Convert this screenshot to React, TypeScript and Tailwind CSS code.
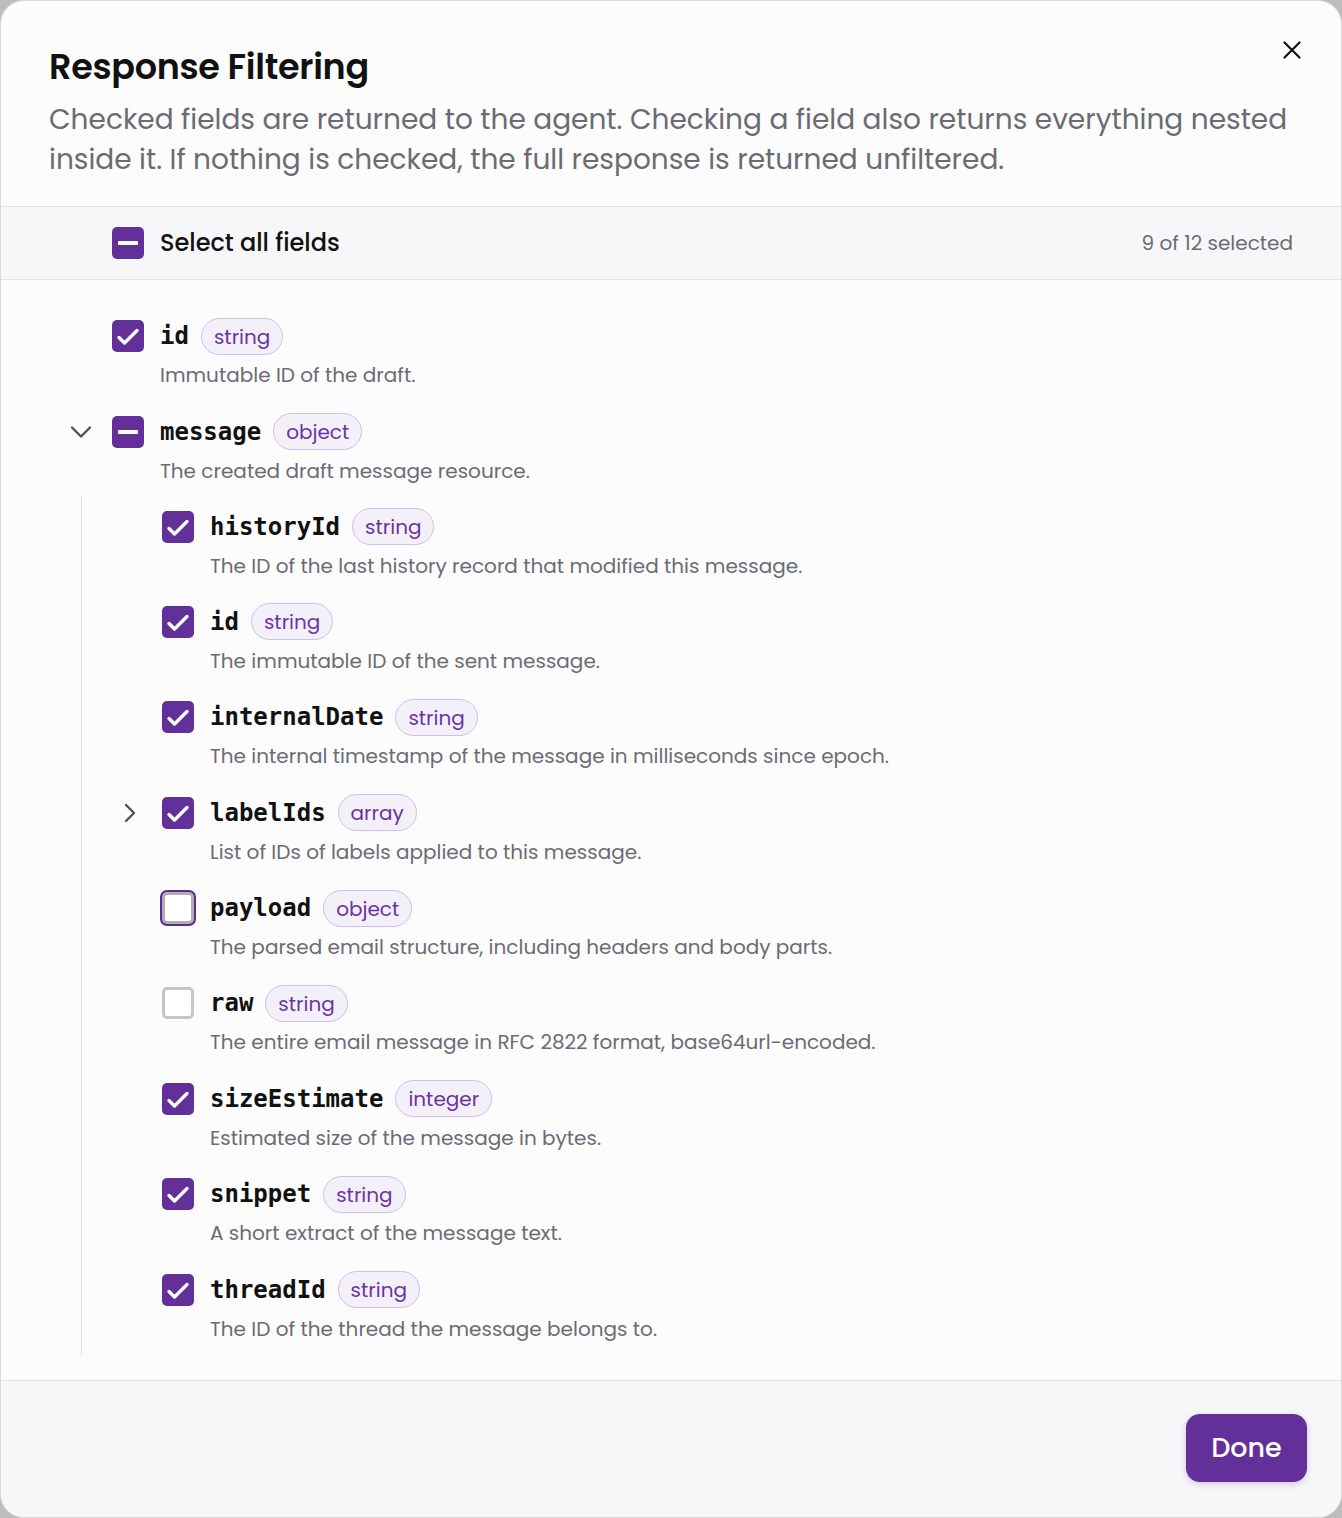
import React, { useState } from "react";

type Field = {
  name: string;
  type: string;
  description: string;
  state: "checked" | "unchecked" | "partial" | "focus";
  expandable?: "open" | "closed";
  children?: Field[];
};

const fields: Field[] = [
  { name: "id", type: "string", description: "Immutable ID of the draft.", state: "checked" },
  {
    name: "message",
    type: "object",
    description: "The created draft message resource.",
    state: "partial",
    expandable: "open",
    children: [
      { name: "historyId", type: "string", description: "The ID of the last history record that modified this message.", state: "checked" },
      { name: "id", type: "string", description: "The immutable ID of the sent message.", state: "checked" },
      { name: "internalDate", type: "string", description: "The internal timestamp of the message in milliseconds since epoch.", state: "checked" },
      { name: "labelIds", type: "array", description: "List of IDs of labels applied to this message.", state: "checked", expandable: "closed" },
      { name: "payload", type: "object", description: "The parsed email structure, including headers and body parts.", state: "focus" },
      { name: "raw", type: "string", description: "The entire email message in RFC 2822 format, base64url-encoded.", state: "unchecked" },
      { name: "sizeEstimate", type: "integer", description: "Estimated size of the message in bytes.", state: "checked" },
      { name: "snippet", type: "string", description: "A short extract of the message text.", state: "checked" },
      { name: "threadId", type: "string", description: "The ID of the thread the message belongs to.", state: "checked" },
    ],
  },
];

const sans = "font-['Poppins','Inter',sans-serif]";
const mono = "font-['DejaVu_Sans_Mono',monospace]";

const Box = ({ state }: { state: Field["state"] }) => {
  if (state === "checked") {
    return (
      <span className="flex h-8 w-8 shrink-0 rounded-[5px] bg-[#632f99]">
        <svg width="32" height="32" viewBox="0 0 32 32" fill="none" stroke="white" strokeWidth="3.4" strokeLinecap="round" strokeLinejoin="round">
          <path d="M7 17.5l5.5 5.5L25 10.5" />
        </svg>
      </span>
    );
  }
  if (state === "partial") {
    return (
      <span className="flex h-8 w-8 shrink-0 items-center justify-center rounded-[5px] bg-[#632f99]">
        <span className="h-1 w-5 rounded-[1px] bg-white" />
      </span>
    );
  }
  if (state === "focus") {
    return (
      <span className="h-8 w-8 shrink-0 rounded-[5px] border-[3px] border-[#b0b0b0] bg-white shadow-[0_0_0_2px_#5a2d8f]" />
    );
  }
  return <span className="h-8 w-8 shrink-0 rounded-[5px] border-[3px] border-[#c6c6c6] bg-white" />;
};

const Chevron = ({ dir }: { dir: "open" | "closed" }) =>
  dir === "open" ? (
    <svg width="22" height="14" viewBox="0 0 22 14" fill="none" stroke="#505057" strokeWidth="2.4" strokeLinecap="round" strokeLinejoin="round">
      <path d="M2 2.5l9 9 9-9" />
    </svg>
  ) : (
    <svg width="14" height="20" viewBox="0 0 14 20" fill="none" stroke="#505057" strokeWidth="2.4" strokeLinecap="round" strokeLinejoin="round">
      <path d="M3 2l8 8-8 8" />
    </svg>
  );

const Row = ({ field }: { field: Field }) => (
  <div className="flex items-start">
    <div className="flex h-[38px] w-[50px] shrink-0 items-center">
      {field.expandable === "open" && (
        <span className="ml-[8px] flex">
          <Chevron dir="open" />
        </span>
      )}
      {field.expandable === "closed" && (
        <span className="ml-[11px] flex">
          <Chevron dir="closed" />
        </span>
      )}
    </div>
    <div className="flex h-[38px] items-center">
      <Box state={field.state} />
    </div>
    <div className="ml-4 flex flex-col">
      <div className="flex h-[38px] items-center gap-3">
        <span className={`${mono} text-[24px] font-bold text-[#111]`}>{field.name}</span>
        <span className={`${sans} flex h-[37px] items-center rounded-full border border-[#d1bde9] bg-[#f4f0f9] px-3 pt-[1px] text-[20px] text-[#6a33a3]`}>
          {field.type}
        </span>
      </div>
      <p className={`${sans} mt-[6px] text-[20px] leading-[28px] text-[#6b6b74]`}>{field.description}</p>
    </div>
  </div>
);

export default function App() {
  const [open] = useState(true);
  return (
    <div className={`${sans} min-h-screen bg-[#bdbdbd]`}>
      <div className="flex min-h-[1518px] flex-col overflow-hidden rounded-[24px] border border-[#dadada] bg-[#fcfcfc]">
        <header className="relative border-b border-[#e2e2e4] px-12 pb-[26px] pt-[44px]">
          <h1 className="text-[35px] font-semibold leading-[44px] tracking-[-0.3px] text-[#111]">Response Filtering</h1>
          <p className="mt-[11px] text-[28px] leading-[40px] text-[#6b6b73]">
            Checked fields are returned to the agent. Checking a field also returns everything nested inside it. If nothing is checked, the full response is returned unfiltered.
          </p>
          <button className="absolute right-[40px] top-[40px] text-[#111]">
            <svg width="18" height="18" viewBox="0 0 18 18" fill="none" stroke="currentColor" strokeWidth="2.2" strokeLinecap="round">
              <path d="M1.5 1.5l15 15M16.5 1.5l-15 15" />
            </svg>
          </button>
        </header>

        <div className="flex h-[73px] items-center justify-between border-b border-[#e2e2e4] bg-[#f7f7f9] pl-[111px] pr-12">
          <div className="flex items-center gap-4">
            <Box state="partial" />
            <span className="text-[24px] font-medium text-[#111]">Select all fields</span>
          </div>
          <span className="text-[20px] text-[#6b6b73]">9 of 12 selected</span>
        </div>

        <div className="flex flex-1 flex-col gap-[23.5px] pb-[24px] pl-[61px] pt-[37px]">
          {fields.map((f) => (
            <div key={f.name} className="flex flex-col">
              <Row field={f} />
              {f.children && open && (
                <div className="ml-[19px] mt-[11px] flex flex-col gap-[23.4px] border-l border-[#dcdcdf] pb-[12px] pl-[30px] pt-[12px]">
                  {f.children.map((c) => (
                    <Row key={c.name} field={c} />
                  ))}
                </div>
              )}
            </div>
          ))}
        </div>

        <footer className="flex justify-end border-t border-[#e2e2e4] bg-[#f7f7f9] pb-[35px] pr-[34px] pt-[33px]">
          <button className="h-[68px] w-[121px] rounded-[14px] bg-[#632f99] text-[27px] font-medium text-white shadow-[0_2px_6px_rgba(101,47,152,0.25)]">
            Done
          </button>
        </footer>
      </div>
    </div>
  );
}
